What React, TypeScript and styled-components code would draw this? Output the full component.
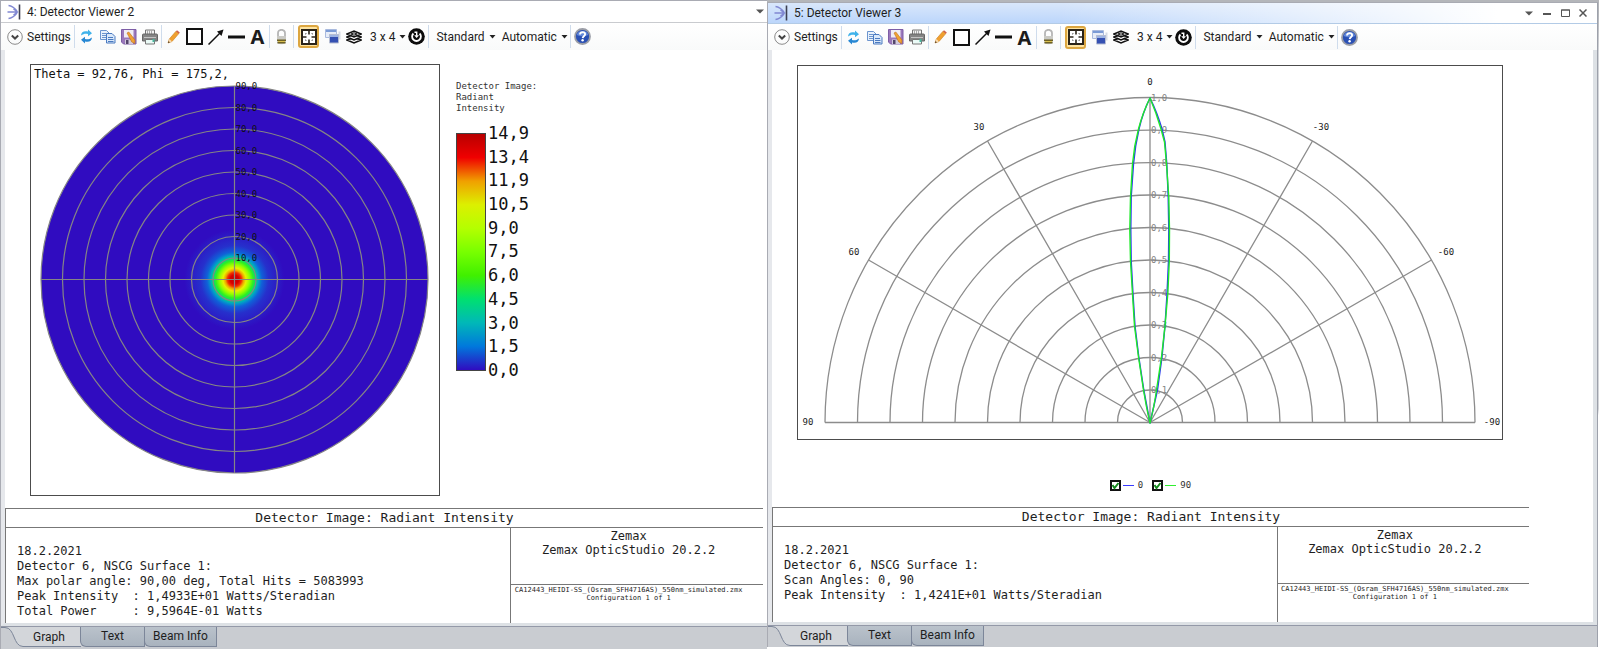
import React from "react";
import styled, { createGlobalStyle, css } from "styled-components";

const ui = `Roboto, "Noto Sans", sans-serif`;
const mono = `"DejaVu Sans Mono", "Liberation Mono", monospace`;

const GlobalStyle = createGlobalStyle`
  * { box-sizing: border-box; }
  body { margin: 0; background: #c9ccd1; font-family: ${ui}; font-size: 12px; color: #1e1e1e; }
  button { font: inherit; color: inherit; border: 0; padding: 0; margin: 0; background: none; }
  h1, h2, p { margin: 0; font: inherit; }
  svg { display: block; }
`;

const Desktop = styled.main`
  display: grid;
  grid-template-columns: minmax(0, 767fr) minmax(0, 832fr);
  min-height: 100vh;
  background: linear-gradient(#b4b6ba 2%, #d3d5d9 8%, #d3d5d9 63%, #fff 64%);
`;

const Window = styled.section<{ $active?: boolean }>`
  display: flex;
  flex-direction: column;
  min-width: 0;
  background: #fff;
  border-left: 1px solid #a9abb3;
  border-top: 1px solid #a9abb3;
  ${(p) =>
    p.$active &&
    css`
      margin: 2px 1px 2px 0;
      border-right: 1px solid #9da1ab;
    `}
`;

const TitleBar = styled.header<{ $active?: boolean }>`
  display: flex;
  align-items: center;
  gap: 5px;
  height: ${(p) => (p.$active ? 21 : 22)}px;
  padding: 0 ${(p) => (p.$active ? 7 : 0)}px 0 6px;
  border-bottom: 1px solid ${(p) => (p.$active ? "#b3cbe6" : "#c9cbcf")};
  background: ${(p) =>
    p.$active
      ? "linear-gradient(90deg, rgba(255,255,255,0) 35%, #fff 88%), linear-gradient(#d9e7fb, #bcd6fb)"
      : "#fff"};
`;

const WindowTitle = styled.h1`
  flex: 1;
  font-size: 12px;
  line-height: 20px;
  white-space: nowrap;
`;

const CaptionButtons = styled.div`
  display: flex;
  gap: 4px;
`;

const CaptionButton = styled.button`
  width: 14px;
  height: 14px;
  display: grid;
  place-items: center;
`;

const Toolbar = styled.div<{ $active?: boolean }>`
  display: flex;
  align-items: center;
  height: ${(p) => (p.$active ? 26 : 27)}px;
  background: linear-gradient(#fff, #f9fafa);
`;

const Separator = styled.span`
  width: 1px;
  height: 23px;
  margin: 0 1px;
  background: #cfdcec;
`;

const ToolButton = styled.button<{ $pressed?: boolean }>`
  display: grid;
  place-items: center;
  flex: none;
  width: 21px;
  height: 23px;
  ${(p) =>
    p.$pressed &&
    css`
      margin: 0 3px;
      border: 2px solid #dca640;
      border-radius: 3px;
      background: #fde3a0;
    `}
`;

const TextButton = styled.button<{ $width: number }>`
  display: flex;
  align-items: center;
  gap: 4px;
  flex: none;
  min-width: ${(p) => p.$width}px;
  height: 23px;
  padding-left: 6px;
  white-space: nowrap;
`;

const Content = styled.div<{ $active?: boolean }>`
  flex: 1;
  display: flex;
  flex-direction: column;
  padding-top: ${(p) => (p.$active ? 15 : 14)}px;
  border-left: 4px solid #e6e8ec;
  border-right: ${(p) => (p.$active ? "4px solid #dde1e5" : "0")};
  border-bottom: 3px solid #dde1e5;
`;

const DetectorArea = styled.div`
  display: flex;
  gap: 16px;
  padding-left: 25px;
`;

const PolarArea = styled.div`
  padding: 0 90px 0 25px;
`;

const PlotFrame = styled.figure`
  margin: 0;
  border: 1px solid #4c4c4c;
`;

const ScaledPlot = styled.svg`
  width: 100%;
  height: auto;
`;

const RingLabel = styled.text`
  font: 9px ${mono};
  fill: #101010;
`;

const AxisLabel = styled.text`
  font: 9px ${mono};
  fill: #858585;
`;

const AngleLabel = styled.text`
  font: 9px ${mono};
  fill: #222;
  text-anchor: middle;
`;

const CursorReadout = styled.text`
  font: 12px ${mono};
  fill: #111;
`;

const Legend = styled.aside`
  padding-top: 17px;
`;

const LegendTitle = styled.p`
  font: 9px/11px ${mono};
  color: #333;
`;

const Scale = styled.div`
  display: flex;
  align-items: center;
  gap: 2px;
  margin-top: 9px;
`;

const ColorBar = styled.div`
  width: 30px;
  height: 238px;
  border: 1px solid #444;
  background: linear-gradient(
    #b80000, #f00000 10%, #f0a000 20%, #dcf000 30%, #b4ff00 40%, #78ff00 50%,
    #40f000 60%, #00e070 70%, #00b8b8 80%, #0078dc 90%, #300cc0
  );
`;

const ScaleLabels = styled.ol`
  list-style: none;
  margin: 0;
  padding: 0;
  height: 257px;
  display: flex;
  flex-direction: column;
  justify-content: space-between;
  font: 17px/20px ${mono};
  color: #111;
`;

const SeriesLegend = styled.div`
  display: flex;
  justify-content: center;
  gap: 9px;
  padding: 38px 64px 15px 0;
`;

const SeriesToggle = styled.label`
  display: flex;
  align-items: center;
  gap: 2px;
  height: 14px;
  font: 9px ${mono};
  color: #333;
`;

const SeriesLine = styled.span<{ $color: string }>`
  width: 11px;
  height: 1px;
  margin-right: 2px;
  background: ${(p) => p.$color};
`;

const CheckCell = styled.span`
  display: grid;
  place-items: center;
  > * { grid-area: 1 / 1; }
  > svg { pointer-events: none; opacity: 0; }
  > input:checked + svg { opacity: 1; }
`;

const Check = styled.input`
  appearance: none;
  width: 11px;
  height: 11px;
  margin: 0;
  border: 2px solid #111;
  background: #fff;
`;

const TitleBlock = styled.section<{ $active?: boolean }>`
  margin: ${(p) => (p.$active ? "auto 64px 0 0" : "auto 4px 0 0")};
  border-left: 1px solid #777;
  border-top: 1px solid #777;
`;

const BlockTitle = styled.h2`
  font: 13px/18px ${mono};
  text-align: center;
  border-bottom: 1px solid #777;
`;

const BlockBody = styled.div`
  display: grid;
  grid-template-columns: minmax(0, 505fr) minmax(0, 253fr);
  min-height: 95px;
`;

const Report = styled.pre`
  margin: 0;
  padding: 16px 0 3px 11px;
  font: 12px/15px ${mono};
`;

const Program = styled.div`
  display: grid;
  grid-template-rows: 57px 1fr;
  border-left: 1px solid #777;
  text-align: center;
`;

const ProgramName = styled.p`
  padding: 1px 17px 0 0;
  font: 12px/14px ${mono};
  border-bottom: 1px solid #777;
`;

const FileName = styled.p`
  padding: 1px 17px 0 0;
  font: 7px/8px ${mono};
  white-space: nowrap;
`;

const TabStrip = styled.nav<{ $active?: boolean }>`
  display: flex;
  height: ${(p) => (p.$active ? 22 : 23)}px;
  border-top: 1px solid #9499a8;
  background: #c9ccd1;
`;

const ActiveTab = styled.button`
  display: grid;
  align-items: center;
  width: 80px;
  height: 20px;
  > * { grid-area: 1 / 1; }
  > span { padding-left: 16px; line-height: 20px; }
`;

const Tab = styled.button<{ $width: number }>`
  width: ${(p) => p.$width}px;
  height: 20px;
  line-height: 19px;
  border: 1px solid #7c8699;
  border-top: 0;
  margin-left: -1px;
  border-bottom-left-radius: 6px;
  background: linear-gradient(#bac2cb, #a9b3be);
`;

const Caret = () => (
  <svg width="7" height="4" viewBox="0 0 7 4"><path d="M0.5 0h6L3.5 3.6z" fill="#222" /></svg>
);

const DetectorIcon = () => (
  <svg width="15" height="16" viewBox="0 0 15 16" fill="none">
    <path d="M1.500 1.500Q6 2 10 7M0.500 8h9.500M1.500 14.500Q6 14 10 9M6.500 5l4 3-4 3" stroke="#8188d2" strokeWidth="1.400" />
    <path d="M12.500 0.500v15" stroke="#3c3f50" strokeWidth="1.600" />
  </svg>
);

const ChevronIcon = () => (
  <svg width="16" height="16" viewBox="0 0 16 16" fill="none">
    <circle cx="8" cy="8" r="7.3" stroke="#8a8a8a" />
    <path d="M4.8 6.6L8 9.6l3.2-3" stroke="#444" strokeWidth="2" />
  </svg>
);

const RefreshIcon = () => (
  <svg width="13" height="15" viewBox="0 0 13 15">
    <path d="M1 6.6C1.2 3 4 1.6 8 2.6V0.4l4 3.8-4 3V5C5.200 4.400 3.600 4.800 1 6.600z" fill="#3fb2ea" />
    <path d="M12 8.400C11.800 12 9 13.400 5 12.400v2.200L1 10.800l4-3V10c2.800.6 4.400.2 7-1.600z" fill="#2687d3" />
  </svg>
);

const CopyIcon = () => (
  <svg width="16" height="15" viewBox="0 0 16 15">
    <path d="M.5 1.500h6l3 3v6h-9z" fill="#e8f1fb" stroke="#6c95cf" />
    <path d="M2 4.500h4M2 6.500h5M2 8.500h5" stroke="#6c95cf" />
    <path d="M6.500 4.500h5.500l3 3v6.500h-8.500z" fill="#d9e8fa" stroke="#4a7ac0" />
    <path d="M8 8.500h5M8 10.500h5.500M8 12.500h5.500" stroke="#4a7ac0" />
  </svg>
);

const SaveIcon = () => (
  <svg width="16" height="16" viewBox="0 0 16 16">
    <path d="M.5.500h14.500v14.500H2.500l-2-2z" fill="#9a78bb" stroke="#7d5da6" />
    <path d="M3 1h9.500v7.500H3z" fill="#efecf4" />
    <path d="M4 10.500h8V15H4z" fill="#d2cbdc" />
    <path d="M5 11h2.500v4H5z" fill="#53456b" />
    <path d="M6 4l1.800-1L14 11l-.2 3.500-3-1.500z" fill="#f0a233" stroke="#bf701a" strokeWidth=".6" />
  </svg>
);

const PrintIcon = () => (
  <svg width="16" height="16" viewBox="0 0 16 16">
    <path d="M3.500 1h9v5h-9z" fill="#f3f3f3" stroke="#777" />
    <path d="M5.500 1v4M7.500 1v4M9.500 1v4" stroke="#aaa" />
    <path d="M.5 6q0-1 1-1h13q1 0 1 1v6H.5z" fill="#858585" stroke="#666" />
    <path d="M2 8.500h12" stroke="#c4c4c4" />
    <path d="M3.500 10.500h9v4.500h-9z" fill="#eafaf6" stroke="#777" />
    <path d="M10.500 10h2v3h-2z" fill="#48b79e" />
  </svg>
);

const PencilIcon = () => (
  <svg width="13" height="14" viewBox="0 0 13 14">
    <path d="M1 13l1.300-4L9 1.200l2.800 2.400L5 11.500z" fill="#f0a030" stroke="#c97d1c" strokeWidth=".6" />
    <path d="M9 1.200l1-1 2.800 2.300-1 1.200z" fill="#d0604a" />
    <path d="M2.300 9L5 11.500l-2.200.8-1.200-1z" fill="#f6dcb4" />
    <path d="M1 13l.5-1.800L2.800 12.300z" fill="#333" />
  </svg>
);

const SquareIcon = () => (
  <svg width="17" height="17" viewBox="0 0 17 17"><path d="M1 1h15v15H1z" fill="#fff" stroke="#111" strokeWidth="2" /></svg>
);

const ArrowIcon = () => (
  <svg width="16" height="16" viewBox="0 0 16 16">
    <path d="M.500 15.500L12 4" stroke="#111" strokeWidth="1.500" /><path d="M15.500.500l-2 6.500L9 2.500z" fill="#111" />
  </svg>
);

const LineIcon = () => (
  <svg width="17" height="4" viewBox="0 0 17 4"><path d="M0 0.500h17v3H0z" fill="#111" /></svg>
);

const LetterA = styled.span`
  font: bold 20px/23px "Noto Sans", "Open Sans", sans-serif;
  color: #1c1c1c;
`;

const LockIcon = () => (
  <svg width="11" height="16" viewBox="0 0 11 16">
    <path d="M2 8V4a3.500 3.200 0 0 1 7 0v4" fill="none" stroke="#b5b5b5" strokeWidth="1.800" />
    <path d="M1 7h9v7q-4.500 2.500-9 0z" fill="#c9c9c4" />
    <path d="M1 10.500h9V12H1zM1.500 13h8v1.400h-8z" fill="#6f6224" /><path d="M2 12h7v1H2z" fill="#d9c04f" />
  </svg>
);

const FitIcon = () => (
  <svg width="16" height="16" viewBox="0 0 16 16">
    <path d="M1 1h14v14H1z" fill="#fff" stroke="#2a2318" strokeWidth="2" />
    <path d="M8 2v3.500M8 14v-3.500M2 8h3.500M14 8h-3.500" stroke="#2a2318" strokeWidth="1.600" />
    <path d="M5.500 4.500h-1v1M10.500 4.500h1v1M5.500 11.500h-1v-1M10.500 11.500h1v-1" stroke="#777" fill="none" />
  </svg>
);

const WindowsIcon = () => (
  <svg width="16" height="15" viewBox="0 0 16 15">
    <path d="M.500.500h11v8H.500z" fill="#e7edf8" stroke="#a9bade" /><path d="M1 1h10v2H1z" fill="#7b9bd6" />
    <path d="M13.500 2.500h2v8h-2z" fill="#d5dae4" />
    <path d="M4.500 5.500h9v8.500h-9z" fill="#3450b2" stroke="#b5bdd2" /><path d="M5 6h8v2H5z" fill="#9db4e4" />
  </svg>
);

const StackIcon = () => (
  <svg width="16" height="14" viewBox="0 0 16 14" fill="#fff" stroke="#111" strokeWidth="1.500">
    <path d="M1 10l7-2.500 7 2.500-7 3z" /><path d="M1 7l7-2.500L15 7l-7 3z" /><path d="M1 4l7-3 7 3-7 3z" /><path d="M5 4l3-1.200L11 4 8 5.200z" strokeWidth="1" />
  </svg>
);

const ResetIcon = () => (
  <svg width="17" height="17" viewBox="0 0 17 17" fill="none">
    <circle cx="8.500" cy="8.500" r="8.300" fill="#0c0c0c" />
    <path d="M11.600 5.500a4.400 4.400 0 1 1-6.200 0" stroke="#fff" strokeWidth="1.800" />
    <path d="M6.500 4.200h2.200v3.600" stroke="#fff" strokeWidth="1.400" />
    <path d="M6.200 7.200h4.800L8.600 10z" fill="#fff" />
  </svg>
);

const HelpIcon = () => (
  <svg width="17" height="17" viewBox="0 0 17 17">
    <circle cx="8.500" cy="8.500" r="7.500" fill="#2a50b4" stroke="#9a9da6" strokeWidth="1.800" />
    <path d="M2.800 7a5.800 5 0 0 1 11.400 0q-6 2.500-11.400 0z" fill="#6288da" />
    <path d="M6 6.500q.2-2.400 2.600-2.400 2.500.1 2.500 2.200c0 1.600-2.300 1.700-2.400 3.800" fill="none" stroke="#fff" strokeWidth="1.900" />
    <circle cx="8.600" cy="12.300" r="1.200" fill="#fff" />
  </svg>
);

function ViewerToolbar({ active }: { active?: boolean }) {
  return (
    <Toolbar $active={active} role="toolbar">
      <TextButton $width={72}><ChevronIcon />Settings</TextButton>
      <Separator />
      <ToolButton aria-label="Update"><RefreshIcon /></ToolButton>
      <ToolButton aria-label="Copy"><CopyIcon /></ToolButton>
      <ToolButton aria-label="Save"><SaveIcon /></ToolButton>
      <ToolButton aria-label="Print"><PrintIcon /></ToolButton>
      <Separator />
      <ToolButton aria-label="Pencil"><PencilIcon /></ToolButton>
      <ToolButton aria-label="Rectangle"><SquareIcon /></ToolButton>
      <ToolButton aria-label="Arrow"><ArrowIcon /></ToolButton>
      <ToolButton aria-label="Line"><LineIcon /></ToolButton>
      <ToolButton aria-label="Annotate"><LetterA>A</LetterA></ToolButton>
      <Separator />
      <ToolButton aria-label="Lock"><LockIcon /></ToolButton>
      <Separator />
      <ToolButton $pressed aria-label="Fit window" aria-pressed="true"><FitIcon /></ToolButton>
      <ToolButton aria-label="Clone"><WindowsIcon /></ToolButton>
      <ToolButton aria-label="Overlay"><StackIcon /></ToolButton>
      <TextButton $width={42}>3 x 4<Caret /></TextButton>
      <ToolButton aria-label="Reset"><ResetIcon /></ToolButton>
      <Separator />
      <TextButton $width={64}>Standard<Caret /></TextButton>
      <TextButton $width={73}>Automatic<Caret /></TextButton>
      <Separator />
      <ToolButton aria-label="Help"><HelpIcon /></ToolButton>
    </Toolbar>
  );
}

function Tabs({ active }: { active?: boolean }) {
  return (
    <TabStrip $active={active}>
      <ActiveTab aria-current="page">
        <svg width="80" height="20" viewBox="0 0 80 20">
          <path d="M0 0h4c10 0 8 19.500 18 19.500H80V0z" fill="#d3d6da" />
          <path d="M0 .500h4c10 0 8 19 18 19H80" fill="none" stroke="#7c8699" />
        </svg>
        <span>Graph</span>
      </ActiveTab>
      <Tab $width={65}>Text</Tab>
      <Tab $width={73}>Beam Info</Tab>
    </TabStrip>
  );
}

const RINGS = [1, 2, 3, 4, 5, 6, 7, 8, 9];
const LEVELS = ["14,9", "13,4", "11,9", "10,5", "9,0", "7,5", "6,0", "4,5", "3,0", "1,5", "0,0"];

function DetectorPlot() {
  const cx = 203.5;
  const cy = 214.5;
  const step = 21.5;
  return (
    <svg width="408" height="430" viewBox="0 0 408 430">
      <defs>
        <radialGradient id="spot" gradientUnits="userSpaceOnUse" cx={cx} cy={cy} r="50">
          <stop offset="0" stopColor="#c00000" />
          <stop offset=".09" stopColor="#d80000" />
          <stop offset=".14" stopColor="#f03000" />
          <stop offset=".18" stopColor="#f0a000" />
          <stop offset=".23" stopColor="#e6f400" />
          <stop offset=".3" stopColor="#90ff00" />
          <stop offset=".37" stopColor="#30f020" />
          <stop offset=".43" stopColor="#00d880" />
          <stop offset=".48" stopColor="#00a0c8" />
          <stop offset=".55" stopColor="#1060d8" />
          <stop offset=".68" stopColor="#2630cc" />
          <stop offset="1" stopColor="#300cc0" />
        </radialGradient>
      </defs>
      <circle cx={cx} cy={cy} r={step * 9} fill="url(#spot)" />
      <g fill="none" stroke="#858585" strokeWidth="1.200">
        {RINGS.map((n) => <circle key={n} cx={cx} cy={cy} r={n * step} />)}
        <path d={`M${cx - 193.5} ${cy}h387M${cx} ${cy - 193.5}v387`} />
      </g>
      {RINGS.map((n) => (
        <RingLabel key={n} x={cx + 1} y={cy + 3 - n * step}>{n * 10},0</RingLabel>
      ))}
      <CursorReadout x="3" y="13">Theta = 92,76, Phi = 175,2,</CursorReadout>
    </svg>
  );
}

const ANGLES: [string, number, number][] = [
  ["0", 352, 19], ["30", 181, 64], ["-30", 523, 64], ["60", 56, 189],
  ["-60", 648, 189], ["90", 10, 359], ["-90", 694, 359],
];

function PolarPlot() {
  const cx = 352;
  const cy = 356.5;
  const step = 32.5;
  const spokes = [30, 60].flatMap((deg) => {
    const a = (deg * Math.PI) / 180;
    const dx = Math.sin(a) * step * 10;
    const dy = Math.cos(a) * step * 10;
    return [`M${cx} ${cy}l${dx} ${-dy}`, `M${cx} ${cy}l${-dx} ${-dy}`];
  });
  return (
    <ScaledPlot viewBox="0 0 704 373">
      <g fill="none" stroke="#8c8c8c" strokeWidth="1.300">
        {[...RINGS, 10].map((n) => (
          <path key={n} d={`M${cx - n * step} ${cy}a${n * step} ${n * step} 0 0 1 ${2 * n * step} 0`} />
        ))}
        <path d={spokes.join("")} />
        <path d={`M${cx - 325} ${cy}h650M${cx} ${cy}v-325`} />
      </g>
      {[...RINGS, 10].map((n) => (
        <AxisLabel key={n} x={cx + 1} y={cy + 3 - n * step}>{(n / 10).toFixed(1).replace(".", ",")}</AxisLabel>
      ))}
      <g fill="none" strokeWidth="1.400" strokeLinejoin="round">
        <path
          d="M352 357L345.800 324 340.800 291 337 260 335 228 333.200 195 332.800 164 333.200 131 335.500 98Q337 80 341 63T352 32Q359 46 364 63L367 76 368.800 98 370.200 131 370.800 164 370.500 195 369 228 367 260 364 291 359.500 324z"
          stroke="#2a38f0"
        />
        <path
          d="M352 357Q348 340 345.500 324L340.500 291 336.500 260 334.500 228 332.500 195 331.800 164 332.500 131 334.500 98Q336 80 340.500 63T352 32Q358 46 363 63L366.500 76 368.500 98 370.800 131 371.500 164 371.300 195 369.800 228 367 260 363.500 291 358.500 324Q356 342 352 357z"
          stroke="#1eea28"
        />
      </g>
      {ANGLES.map(([text, x, y]) => <AngleLabel key={text} x={x} y={y}>{text}</AngleLabel>)}
    </ScaledPlot>
  );
}

function Series({ label, color }: { label: string; color: string }) {
  return (
    <SeriesToggle>
      <CheckCell>
        <Check type="checkbox" defaultChecked />
        <svg width="9" height="9" viewBox="0 0 9 9"><path d="M1.500 4l2 3L7.500 2" fill="none" stroke="#138a1c" strokeWidth="2" /></svg>
      </CheckCell>
      <SeriesLine $color={color} />
      {label}
    </SeriesToggle>
  );
}

function ReportBlock({ active, lines }: { active?: boolean; lines: string[] }) {
  return (
    <TitleBlock $active={active}>
      <BlockTitle>Detector Image: Radiant Intensity</BlockTitle>
      <BlockBody>
        <Report>{lines.join("\n")}</Report>
        <Program>
          <ProgramName>Zemax<br />Zemax OpticStudio 20.2.2</ProgramName>
          <FileName>CA12443_HEIDI-SS_(Osram_SFH4716AS)_550nm_simulated.zmx<br />Configuration 1 of 1</FileName>
        </Program>
      </BlockBody>
    </TitleBlock>
  );
}

export default function App() {
  return (
    <>
      <GlobalStyle />
      <Desktop>
        <Window>
          <TitleBar>
            <DetectorIcon />
            <WindowTitle>4: Detector Viewer 2</WindowTitle>
            <CaptionButtons>
              <CaptionButton aria-label="Window menu"><svg width="8" height="5" viewBox="0 0 8 5"><path d="M0 .500h8L4 4.500z" fill="#555" /></svg></CaptionButton>
            </CaptionButtons>
          </TitleBar>
          <ViewerToolbar />
          <Content>
            <DetectorArea>
              <PlotFrame><DetectorPlot /></PlotFrame>
              <Legend>
                <LegendTitle>Detector Image:<br />Radiant<br />Intensity</LegendTitle>
                <Scale>
                  <ColorBar />
                  <ScaleLabels>{LEVELS.map((v) => <li key={v}>{v}</li>)}</ScaleLabels>
                </Scale>
              </Legend>
            </DetectorArea>
            <ReportBlock
              lines={[
                "18.2.2021",
                "Detector 6, NSCG Surface 1:",
                "Max polar angle: 90,00 deg, Total Hits = 5083993",
                "Peak Intensity  : 1,4933E+01 Watts/Steradian",
                "Total Power     : 9,5964E-01 Watts",
              ]}
            />
          </Content>
          <Tabs />
        </Window>

        <Window $active>
          <TitleBar $active>
            <DetectorIcon />
            <WindowTitle>5: Detector Viewer 3</WindowTitle>
            <CaptionButtons>
              <CaptionButton aria-label="Window menu"><svg width="8" height="5" viewBox="0 0 8 5"><path d="M0 .500h8L4 4.500z" fill="#555" /></svg></CaptionButton>
              <CaptionButton aria-label="Minimize"><svg width="8" height="8" viewBox="0 0 8 8"><path d="M0 4h8v2H0z" fill="#555" /></svg></CaptionButton>
              <CaptionButton aria-label="Maximize"><svg width="9" height="8" viewBox="0 0 9 8"><path d="M.500 1h8v6.500h-8zM0 1h9" fill="none" stroke="#555" /></svg></CaptionButton>
              <CaptionButton aria-label="Close"><svg width="8" height="8" viewBox="0 0 8 8"><path d="M.500.500l7 7M7.500.500l-7 7" stroke="#555" strokeWidth="1.500" /></svg></CaptionButton>
            </CaptionButtons>
          </TitleBar>
          <ViewerToolbar active />
          <Content $active>
            <PolarArea>
              <PlotFrame><PolarPlot /></PlotFrame>
            </PolarArea>
            <SeriesLegend>
              <Series label="0" color="#3a3aff" />
              <Series label="90" color="#30ee30" />
            </SeriesLegend>
            <ReportBlock
              active
              lines={[
                "18.2.2021",
                "Detector 6, NSCG Surface 1:",
                "Scan Angles: 0, 90",
                "Peak Intensity  : 1,4241E+01 Watts/Steradian",
              ]}
            />
          </Content>
          <Tabs active />
        </Window>
      </Desktop>
    </>
  );
}
